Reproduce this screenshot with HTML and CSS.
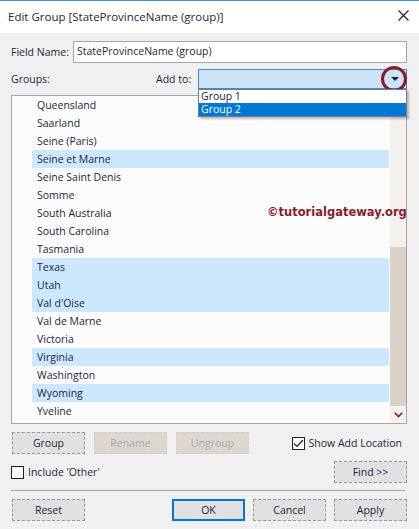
FILE: index.html
```html
<!DOCTYPE html>
<html>
<head>
<meta charset="utf-8">
<link rel="stylesheet" href="styles.css">
</head>
<body>
<div class="window">
  <div class="titlebar">
    <span class="title">Edit Group [StateProvinceName (group)]</span>
    <svg class="close" width="11" height="11" viewBox="0 0 11 11"><path d="M0.5 0.5 L10.5 10.5 M10.5 0.5 L0.5 10.5" stroke="#1e1e3c" stroke-width="1.2" fill="none"/></svg>
  </div>
  <div class="content">
    <div class="row field-row">
      <span class="lbl field-lbl">Field Name:</span>
      <div class="textbox">StateProvinceName (group)</div>
    </div>
    <div class="row groups-row">
      <span class="lbl groups-lbl">Groups:</span>
      <span class="lbl addto-lbl">Add to:</span>
      <div class="combo">
        <span class="combo-arrow"></span>
        <span class="circle"></span>
        <div class="dropdown">
          <div class="opt">Group 1</div>
          <div class="opt sel">Group 2</div>
        </div>
      </div>
    </div>
    <div class="listbox">
      <div class="items">
        <div class="item">Queensland</div>
        <div class="item">Saarland</div>
        <div class="item">Seine (Paris)</div>
        <div class="item hl">Seine et Marne</div>
        <div class="item">Seine Saint Denis</div>
        <div class="item">Somme</div>
        <div class="item">South Australia</div>
        <div class="item">South Carolina</div>
        <div class="item">Tasmania</div>
        <div class="item hl">Texas</div>
        <div class="item hl">Utah</div>
        <div class="item hl">Val d'Oise</div>
        <div class="item">Val de Marne</div>
        <div class="item">Victoria</div>
        <div class="item hl">Virginia</div>
        <div class="item">Washington</div>
        <div class="item hl">Wyoming</div>
        <div class="item">Yveline</div>
      </div>
      <div class="scrollbar">
        <div class="track"></div>
        <div class="thumb"></div>
        <div class="down">
          <svg width="9" height="6" viewBox="0 0 9 6"><path d="M0.8 0.8 L4.5 4.5 L8.2 0.8" stroke="#8b1a2b" stroke-width="1.6" fill="none"/></svg>
        </div>
      </div>
      <div class="watermark">©tutorialgateway.org</div>
    </div>
    <div class="row btn-row">
      <div class="btn">Group</div>
      <div class="btn disabled">Rename</div>
      <div class="btn disabled">Ungroup</div>
      <div class="spacer"></div>
      <label class="check"><span class="box checked"><svg width="11" height="9" viewBox="0 0 11 9"><path d="M1 4.5 L4 7.5 L10 1" stroke="#1e1e3c" stroke-width="1.2" fill="none"/></svg></span>Show Add Location</label>
    </div>
    <div class="row other-row">
      <label class="check"><span class="box"></span>Include 'Other'</label>
      <div class="spacer"></div>
      <div class="btn">Find &gt;&gt;</div>
    </div>
    <div class="sep"></div>
    <div class="row bottom-row">
      <div class="btn">Reset</div>
      <div class="spacer"></div>
      <div class="btn ok">OK</div>
      <div class="btn">Cancel</div>
      <div class="btn">Apply</div>
    </div>
  </div>
</div>
</body>
</html>
```
FILE: styles.css
```css
html, body {
  margin: 0;
  padding: 0;
}
body {
  font-family: "Open Sans", "Noto Sans", sans-serif;
  font-size: 10.5px;
  color: #1e1e3c;
}
.window {
  width: 419px;
  height: 529px;
  background: #f0f0f0;
  display: flex;
  flex-direction: column;
  box-sizing: border-box;
  border-top: 1px solid #3c8ed8;
}
.titlebar {
  height: 32px;
  background: #ffffff;
  display: flex;
  align-items: center;
  padding: 0 10px 0 8px;
  flex: none;
}
.title {
  font-size: 11.5px;
  color: #2a1e3c;
  flex: 1;
  margin-top: -2px;
  white-space: nowrap;
}
.close {
  margin-top: -3px;
}
.content {
  flex: 1;
  padding: 8px 12px 0 11px;
  display: flex;
  flex-direction: column;
}
.row {
  display: flex;
  align-items: center;
  white-space: nowrap;
}
.lbl {
  line-height: 16px;
}
.field-row {
  height: 22px;
}
.field-lbl {
  width: 62px;
  flex: none;
}
.textbox {
  flex: 1;
  height: 22px;
  box-sizing: border-box;
  border: 1px solid #a9a4a0;
  background: #ffffff;
  padding: 0 3px;
  line-height: 19px;
}
.groups-row {
  height: 20px;
  margin-top: 6px;
  position: relative;
  z-index: 5;
}
.groups-lbl {
  width: 145px;
  flex: none;
}
.addto-lbl {
  width: 42px;
  flex: none;
}
.combo {
  flex: 1;
  height: 20px;
  box-sizing: border-box;
  border: 1px solid #3c8ed8;
  background: #cce4f7;
  position: relative;
}
.combo-arrow {
  position: absolute;
  right: 7px;
  top: 7px;
  width: 0;
  height: 0;
  border-left: 4px solid transparent;
  border-right: 4px solid transparent;
  border-top: 4px solid #1e1e3c;
}
.circle {
  position: absolute;
  right: -1px;
  top: -4px;
  width: 20px;
  height: 20px;
  border: 3px solid #8b1a2b;
  border-radius: 50%;
}
.dropdown {
  position: absolute;
  left: -1px;
  right: -1px;
  top: 19px;
  background: #ffffff;
  border: 1px solid #7a7a7a;
  box-shadow: 2px 2px 2px rgba(0,0,0,0.25);
}
.opt {
  height: 13px;
  line-height: 13px;
  padding-left: 2px;
}
.opt.sel {
  background: #0078d7;
  color: #ffffff;
}
.listbox {
  margin-top: 6px;
  height: 329px;
  box-sizing: border-box;
  border: 1px solid #a9a4a0;
  background: #fcfcfc;
  display: flex;
  position: relative;
}
.items {
  flex: 1;
  padding-left: 20px;
  display: flex;
  flex-direction: column;
}
.item {
  height: 18px;
  line-height: 18px;
  padding-left: 5px;
}
.item.hl {
  background: #cce8ff;
}
.scrollbar {
  width: 16px;
  margin-left: 1px;
  display: flex;
  flex-direction: column;
}
.track {
  height: 151px;
  background: #f3f1ee;
}
.thumb {
  height: 159px;
  background: #d9d3c7;
}
.down {
  flex: 1;
  display: flex;
  align-items: center;
  justify-content: center;
  background: #f3f1ee;
}
.watermark {
  position: absolute;
  left: 255px;
  top: 109px;
  font-family: "DejaVu Sans", sans-serif;
  font-weight: bold;
  font-size: 11.5px;
  color: #8b1a2b;
  white-space: nowrap;
}
.btn-row {
  margin-top: 8px;
  height: 22px;
  gap: 9px;
}
.spacer {
  flex: 1;
}
.btn {
  width: 73px;
  height: 22px;
  box-sizing: border-box;
  border: 1px dashed #a09890;
  background: #e1e1e1;
  display: flex;
  align-items: center;
  justify-content: center;
  flex: none;
}
.btn-row .btn:first-child {
  margin-left: 1px;
}
.btn.disabled {
  color: #a8a8a8;
  background: #dcd8cf;
  border-color: #d4d0c8;
}
.check {
  display: flex;
  align-items: center;
  gap: 4px;
}
.box {
  width: 13px;
  height: 13px;
  box-sizing: border-box;
  border: 1px solid #1e1e3c;
  background: #ffffff;
  display: flex;
  align-items: center;
  justify-content: center;
}
.btn-row .check {
  margin-right: 5px;
}
.other-row {
  margin-top: 7px;
  height: 22px;
}
.sep {
  margin-top: 7px;
  height: 1px;
  background: #a9a4a0;
  margin-right: 2px;
}
.bottom-row {
  margin-top: 8px;
  height: 22px;
  gap: 8px;
}
.bottom-row .btn:first-child {
  margin-left: 1px;
}
.btn.ok {
  border: 2px solid #0078d7;
}
```
